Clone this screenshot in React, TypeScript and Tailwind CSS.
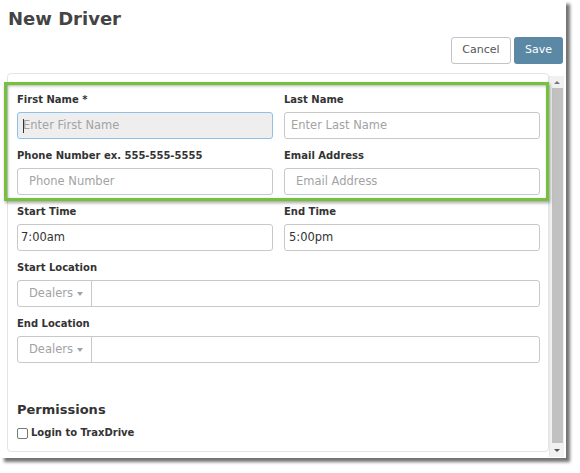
import React from "react";

function Label({ children }: { children: React.ReactNode }) {
  return (
    <div className="text-[10px] leading-[14px] font-bold text-[#333] mb-[5px] whitespace-nowrap">
      {children}
    </div>
  );
}

function Field({
  label,
  placeholder,
  value,
  pl,
  focused,
}: {
  label: string;
  placeholder?: string;
  value?: string;
  pl: string;
  focused?: boolean;
}) {
  return (
    <div>
      <Label>{label}</Label>
      <div
        className={
          "relative h-[27px] rounded-[3px] border flex items-center text-[11.5px] " +
          (focused ? "bg-[#eeeeee] border-[#8ec1ea] " : "bg-white border-[#c8c8c8] ") +
          pl
        }
      >
        {value ? (
          <span className="text-[#333]">{value}</span>
        ) : (
          <span className="text-[#a3a3a3]">{placeholder}</span>
        )}
        {focused && (
          <span className="absolute left-[5px] top-[6px] w-[1px] h-[14px] bg-[#333]" />
        )}
      </div>
    </div>
  );
}

function LocationField({ label }: { label: string }) {
  return (
    <div className="col-span-2">
      <Label>{label}</Label>
      <div className="flex h-[27px] rounded-[3px] border border-[#c8c8c8] bg-white">
        <div className="w-[74px] border-r border-[#c8c8c8] flex items-center pl-[11px] text-[11.5px] text-[#a3a3a3]">
          Dealers
          <span className="ml-[4px] mt-[1px] w-0 h-0 border-t-[4px] border-t-[#a3a3a3] border-x-[3px] border-x-transparent" />
        </div>
        <div className="flex-1" />
      </div>
    </div>
  );
}

export default function App() {
  return (
    <div className="w-[580px] h-[473px] bg-white relative font-['DejaVu_Sans',sans-serif]">
      <div className="w-[566px] h-[458px] bg-white shadow-[4px_4px_3px_rgba(0,0,0,0.55)] flex flex-col relative">
        <div className="pl-[8px] pt-[7px] text-[18px] leading-[24px] font-bold text-[#444]">
          New Driver
        </div>
        <div className="flex justify-end gap-[3px] pr-[3px] mt-[6px]">
          <div className="h-[27px] w-[60px] rounded-[3px] border border-[#c4c4c4] bg-white flex items-center justify-center text-[11px] text-[#555]">
            Cancel
          </div>
          <div className="h-[27px] w-[49px] rounded-[3px] bg-[#5b88a4] flex items-center justify-center text-[11px] text-white">
            Save
          </div>
        </div>
        <div className="flex items-start pl-[7px] mt-[9px]">
          <div className="w-[542px] h-[379px] border border-[#e4e4e4] rounded-[4px] pt-[19px] pl-[9px] pr-[8px]">
            <div className="grid grid-cols-2 gap-x-[11px] gap-y-[10px]">
              <Field label="First Name *" placeholder="Enter First Name" pl="pl-[5px]" focused />
              <Field label="Last Name" placeholder="Enter Last Name" pl="pl-[6px]" />
              <Field label="Phone Number ex. 555-555-5555" placeholder="Phone Number" pl="pl-[11px]" />
              <Field label="Email Address" placeholder="Email Address" pl="pl-[11px]" />
              <Field label="Start Time" value="7:00am" pl="pl-[3px]" />
              <Field label="End Time" value="5:00pm" pl="pl-[4px]" />
              <LocationField label="Start Location" />
              <LocationField label="End Location" />
            </div>
            <div className="mt-[38px] text-[13px] leading-[18px] font-bold text-[#333]">
              Permissions
            </div>
            <div className="mt-[7px] h-[14px] flex items-center gap-[3px]">
              <span className="w-[11px] h-[11px] rounded-[2px] border border-[#777] bg-white" />
              <span className="text-[10px] leading-[14px] font-bold text-[#333]">
                Login to TraxDrive
              </span>
            </div>
          </div>
          <div className="mt-[3px] w-[15px] h-[381px] bg-[#f1f1f1] border-l border-[#e8e8e8] flex flex-col items-center">
            <div className="h-[12px] flex items-center justify-center">
              <span className="w-0 h-0 border-b-[3px] border-b-[#777] border-x-[3px] border-x-transparent" />
            </div>
            <div className="flex-1 w-[11px] bg-[#c1c1c1]" />
            <div className="h-[14px] flex items-center justify-center">
              <span className="w-0 h-0 border-t-[3px] border-t-[#555] border-x-[3px] border-x-transparent" />
            </div>
          </div>
        </div>
        <div className="absolute left-[4px] top-[82px] w-[545px] h-[119px] border-[3px] border-[#74c23c] shadow-[1px_2px_3px_rgba(0,0,0,0.35),inset_1px_1px_3px_rgba(0,0,0,0.3)]" />
      </div>
    </div>
  );
}
